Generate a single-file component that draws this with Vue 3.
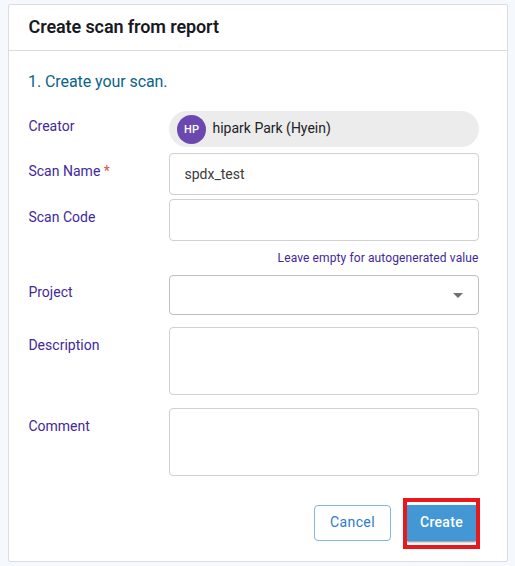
<script setup>
import { ref } from 'vue'

const scanName = ref('spdx_test')
const scanCode = ref('')
const description = ref('')
const comment = ref('')
</script>

<template>
  <main class="page">
    <form class="card" @submit.prevent>
      <header class="card-header"><h1>Create scan from report</h1></header>
      <section class="card-body">
        <h2>1. Create your scan.</h2>

        <div class="row creator">
          <span class="label">Creator</span>
          <div class="chip">
            <span class="avatar">HP</span>
            <span class="person">hipark Park (Hyein)</span>
          </div>
        </div>

        <div class="row name">
          <label class="label" for="scan-name">Scan Name <span class="required">*</span></label>
          <input id="scan-name" v-model="scanName" class="control" type="text" spellcheck="false" />
        </div>

        <div class="row code">
          <label class="label" for="scan-code">Scan Code</label>
          <div class="field">
            <input id="scan-code" v-model="scanCode" class="control" type="text" />
            <p class="hint"><span>Leave empty for autogenerated value</span></p>
          </div>
        </div>

        <div class="row project">
          <span class="label">Project</span>
          <div class="select">
            <svg width="24" height="24" viewBox="0 0 24 24" fill="currentColor"><path d="M7 10l5 5 5-5z" /></svg>
          </div>
        </div>

        <div class="row description">
          <label class="label" for="description">Description</label>
          <textarea id="description" v-model="description" class="control area"></textarea>
        </div>

        <div class="row comment">
          <label class="label" for="comment">Comment</label>
          <textarea id="comment" v-model="comment" class="control area"></textarea>
        </div>

        <footer class="actions">
          <button class="btn cancel" type="button"><span>Cancel</span></button>
          <div class="highlight">
            <button class="btn create" type="submit"><span>Create</span></button>
          </div>
        </footer>
      </section>
    </form>
  </main>
</template>

<style>
body {
  background: #f5f9fd;
}
</style>

<style scoped>
* {
  box-sizing: border-box;
}
.page {
  height: 566px;
  padding: 4px 7px 4px 8px;
  font-family: Roboto, sans-serif;
  background: #f5f9fd;
}
.card {
  height: 558px;
  background: #fff;
  border: 1px solid #dcdcde;
  border-radius: 2px;
}
.card-header {
  height: 46px;
  padding: 0 19.5px;
  border-bottom: 1px solid #dcdcde;
}
h1 {
  margin: 0;
  font-size: 18px;
  font-weight: 600;
  line-height: 44px;
  letter-spacing: -0.1px;
  color: #19191f;
  white-space: nowrap;
}
.card-body {
  padding: 21px 28px 0 19px;
}
h2 {
  margin: 0 0 19px;
  font-size: 16px;
  font-weight: 400;
  line-height: 20px;
  letter-spacing: -0.07px;
  color: #0b6389;
}
.row {
  display: grid;
  grid-template-columns: 141px 310px;
  align-items: start;
}
.label {
  padding-top: 9px;
  padding-left: 0.4px;
  font-size: 14px;
  line-height: 18px;
  letter-spacing: 0.02px;
  color: #42289c;
  white-space: nowrap;
}
.creator .label {
  padding-top: 6px;
}
.project .label {
  padding-top: 8px;
}
.required {
  color: #d4574e;
}
.chip {
  display: flex;
  align-items: center;
  gap: 6.5px;
  height: 36px;
  padding: 0 8px;
  border-radius: 18px;
  background: #ececec;
}
.avatar {
  width: 29px;
  height: 29px;
  border-radius: 50%;
  background: #6b48b0;
  color: #fff;
  font-size: 11px;
  font-weight: 500;
  line-height: 30px;
  text-align: center;
}
.person {
  font-size: 14px;
  line-height: 18px;
  color: #212127;
  padding-bottom: 2px;
}
.name {
  margin-top: 6px;
}
.code {
  margin-top: 4px;
}
.control {
  display: block;
  width: 310px;
  height: 42px;
  margin: 0;
  padding: 0 14.5px;
  border: 1px solid #cfcfd4;
  border-radius: 4px;
  outline: none;
  background: #fff;
  font-family: inherit;
  font-size: 14px;
  color: #3a3a3a;
}
.area {
  height: 68px;
  resize: none;
}
.hint {
  height: 34px;
  margin: 0;
  padding: 9px 0.5px 0 0;
  font-size: 12px;
  line-height: 16px;
  letter-spacing: 0.11px;
  text-align: right;
  color: #42289c;
}
.select {
  display: flex;
  align-items: center;
  justify-content: flex-end;
  height: 40px;
  padding-right: 8px;
  border: 1px solid #bebebe;
  border-radius: 4px;
  color: #707070;
}
.description {
  margin-top: 12px;
}
.comment {
  margin-top: 13px;
}
.actions {
  display: flex;
  justify-content: flex-end;
  align-items: flex-start;
  gap: 12px;
  margin: 22px -1px 0 0;
}
.btn {
  height: 36px;
  padding: 0 0 2px;
  font-family: inherit;
  font-size: 14px;
  letter-spacing: 0.4px;
}
.cancel {
  width: 77px;
  margin-top: 7px;
  border: 1px solid #83b5e8;
  border-radius: 4px;
  background: #fff;
  color: #287bd0;
  font-weight: 400;
}
.highlight {
  width: 77px;
  height: 51px;
  padding-top: 3px;
  border: 4px solid #e8191c;
  overflow: hidden;
}
.create {
  display: block;
  width: 69px;
  border: 0;
  background: #4397d5;
  color: #fff;
  font-weight: 500;
  letter-spacing: 0.3px;
  box-shadow: 0 1px 2px rgba(0, 0, 0, 0.5);
}
</style>
